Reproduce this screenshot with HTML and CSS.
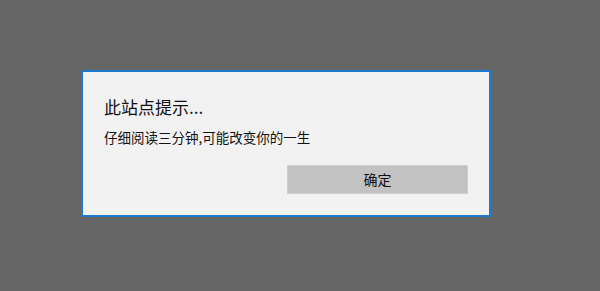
FILE: index.html
```html
<!DOCTYPE html>
<html lang="zh-CN">

<head>
    <meta charset="UTF-8">
    <title>此站点提示</title>
    <meta name="viewport" content="width=device-width, initial-scale=1.0">
    <link rel="stylesheet" href="styles.css">
</head>

<body>
    <div class="dialog">
        <div class="title">此站点提示...</div>
        <div class="message">仔细阅读三分钟,可能改变你的一生</div>
        <div class="actions">
            <button class="ok">确定</button>
        </div>
    </div>
</body>

</html>
```

FILE: styles.css
```css
body {
    margin: 0;
    min-height: 100vh;
    background: #666666;
    padding: 70px 0 0 81px;
    box-sizing: border-box;
    font-family: "Noto Sans CJK SC", "Noto Sans", sans-serif;
}

.dialog {
    width: 410px;
    height: 147px;
    box-sizing: border-box;
    background: #f2f2f2;
    border: 2px solid #1d7ad0;
    padding: 23px 21px 0 21px;
    color: #111;
}

.title {
    font-size: 17px;
    line-height: 24px;
}

.message {
    margin-top: 8px;
    font-size: 13.5px;
    line-height: 20px;
}

.actions {
    margin-top: 18px;
    display: flex;
    justify-content: flex-end;
}

.ok {
    width: 181px;
    height: 29px;
    background: #c2c2c2;
    border: 1px solid #cfcfcf;
    font-family: inherit;
    font-size: 14px;
    line-height: 25px;
    color: #111;
    padding: 0;
    cursor: pointer;
}
```
